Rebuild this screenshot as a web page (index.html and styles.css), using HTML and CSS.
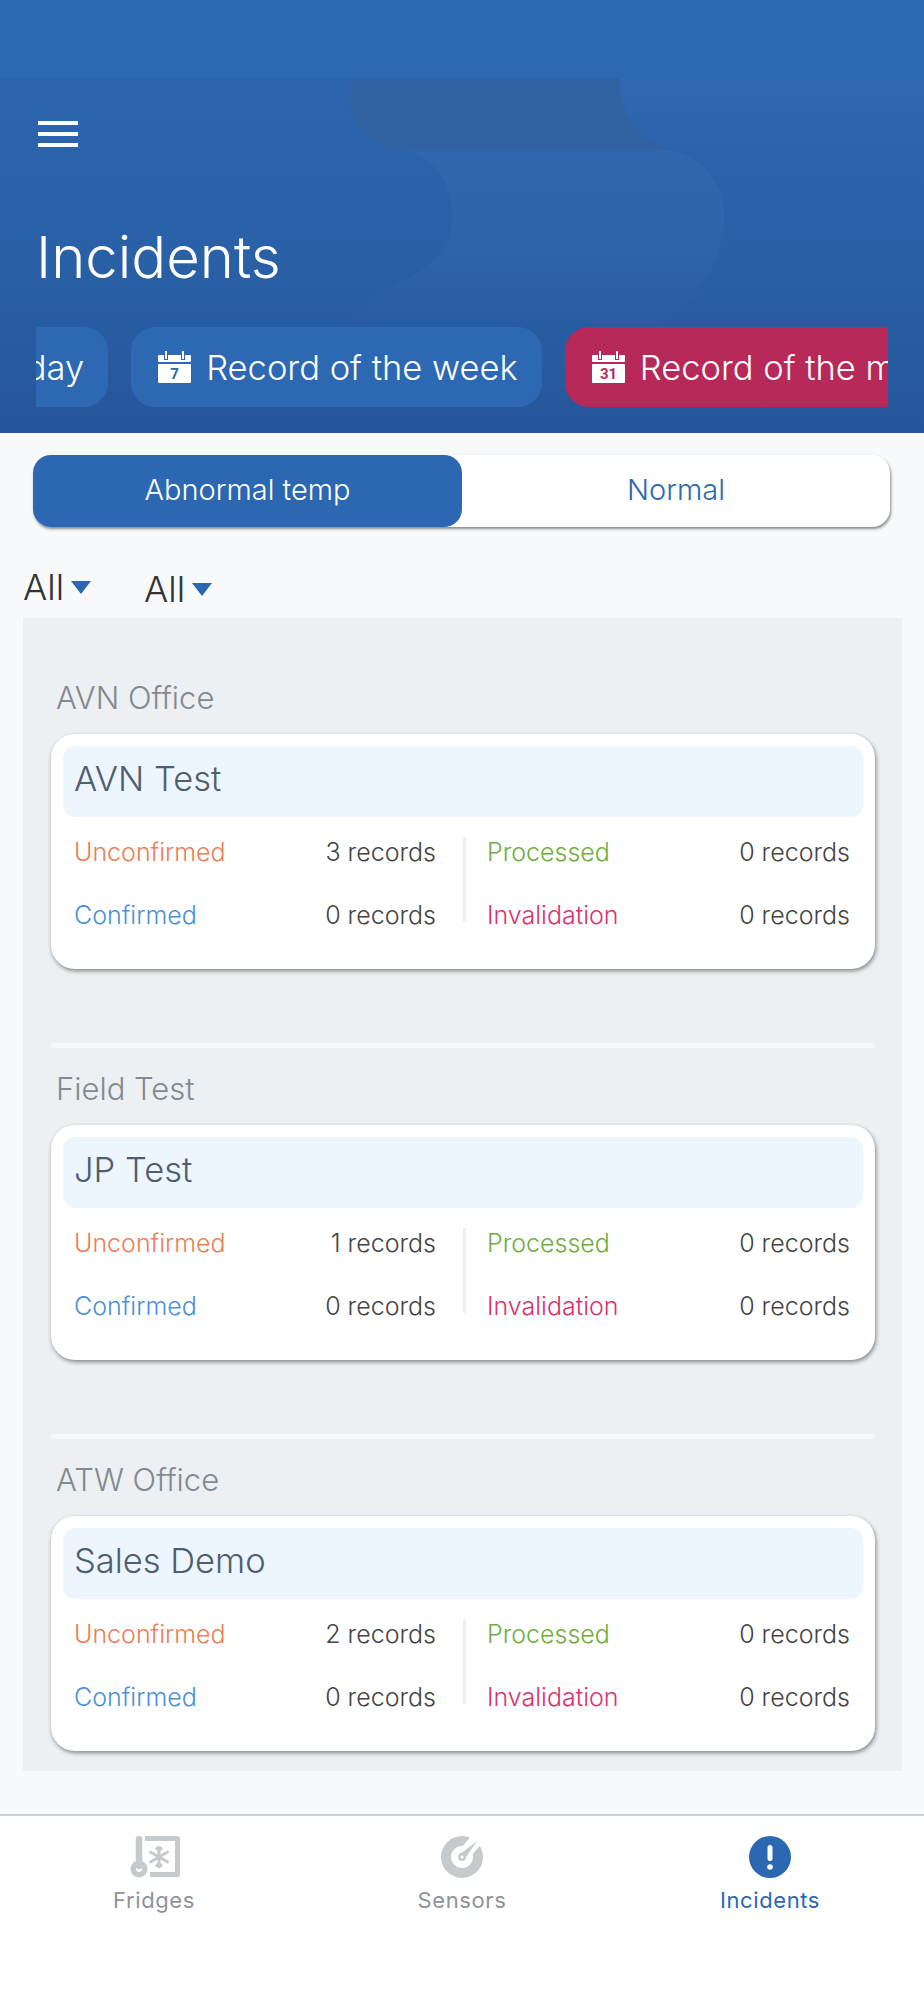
FILE: index.html
```html
<!DOCTYPE html>
<html lang="en">
<head>
    <meta charset="UTF-8">
    <meta name="viewport" content="width=device-width, initial-scale=1.0">
    <title>Incidents</title>
    <link rel="stylesheet" href="styles.css">
</head>
<body>
    <header class="top">
        <!-- Faint background shapes -->
        <svg class="top-shapes" width="924" height="433" viewBox="0 0 924 433">
            <defs>
                <linearGradient id="fade" x1="0" y1="0" x2="0" y2="1">
                    <stop offset="0" stop-color="#fff" stop-opacity="0.025"/>
                    <stop offset="0.7" stop-color="#fff" stop-opacity="0.02"/>
                    <stop offset="1" stop-color="#fff" stop-opacity="0"/>
                </linearGradient>
                <linearGradient id="fadeTop" x1="0" y1="0" x2="0" y2="1">
                    <stop offset="0" stop-color="#fff" stop-opacity="0.03"/>
                    <stop offset="1" stop-color="#fff" stop-opacity="0"/>
                </linearGradient>
            </defs>
            <path d="M350 78V100C352 130 372 150 405 150H670C635 140 620 115 620 78Z" fill="#3f5f8c" opacity="0.3"/>
            <path d="M620 78C620 115 635 140 670 150H924V78Z" fill="url(#fadeTop)"/>
            <path d="M405 150H670C705 158 724 185 724 215C724 265 700 300 650 330H350C352 310 375 295 405 280C438 262 452 245 452 215C452 180 430 155 405 150Z" fill="url(#fade)"/>
        </svg>
        <div class="menu"><span></span><span></span><span></span></div>
        <h1>Incidents</h1>
        <div class="chips">
            <div class="chip chip-first">Record of the day</div>
            <div class="chip">
                <svg class="cal" width="33" height="32" viewBox="0 0 33 32">
                    <rect y="4" width="33" height="7" rx="1" fill="#fff"/>
                    <rect y="13" width="33" height="19" rx="1" fill="#fff"/>
                    <rect x="6" y="4" width="4" height="5" class="cal-blue"/>
                    <rect x="23" y="4" width="4" height="5" class="cal-blue"/>
                    <rect x="7" y="0" width="2" height="8" fill="#fff"/>
                    <rect x="24" y="0" width="2" height="8" fill="#fff"/>
                    <text x="16.5" y="28" class="cal-num cal-blue">7</text>
                </svg>
                Record of the week
            </div>
            <div class="chip chip-active">
                <svg class="cal" width="33" height="32" viewBox="0 0 33 32">
                    <rect y="4" width="33" height="7" rx="1" fill="#fff"/>
                    <rect y="13" width="33" height="19" rx="1" fill="#fff"/>
                    <rect x="6" y="4" width="4" height="5" class="cal-red"/>
                    <rect x="23" y="4" width="4" height="5" class="cal-red"/>
                    <rect x="7" y="0" width="2" height="8" fill="#fff"/>
                    <rect x="24" y="0" width="2" height="8" fill="#fff"/>
                    <text x="16.5" y="28" class="cal-num cal-red">31</text>
                </svg>
                Record of the month
            </div>
        </div>
    </header>

    <main>
        <div class="segment">
            <div class="segment-item segment-on">Abnormal temp</div>
            <div class="segment-item">Normal</div>
        </div>

        <div class="filters">
            <div class="filter">All<span class="caret"></span></div>
            <div class="filter filter-second">All<span class="caret"></span></div>
        </div>

        <div class="panel">
            <!-- AVN Office -->
            <section class="group">
                <h2>AVN Office</h2>
                <div class="card">
                    <div class="card-title">AVN Test</div>
                    <div class="stats">
                        <div class="col">
                            <p><span class="orange">Unconfirmed</span><span>3 records</span></p>
                            <p><span class="blue">Confirmed</span><span>0 records</span></p>
                        </div>
                        <div class="col">
                            <p><span class="green">Processed</span><span>0 records</span></p>
                            <p><span class="pink">Invalidation</span><span>0 records</span></p>
                        </div>
                    </div>
                </div>
            </section>

            <!-- Field Test -->
            <section class="group">
                <h2>Field Test</h2>
                <div class="card">
                    <div class="card-title">JP Test</div>
                    <div class="stats">
                        <div class="col">
                            <p><span class="orange">Unconfirmed</span><span>1 records</span></p>
                            <p><span class="blue">Confirmed</span><span>0 records</span></p>
                        </div>
                        <div class="col">
                            <p><span class="green">Processed</span><span>0 records</span></p>
                            <p><span class="pink">Invalidation</span><span>0 records</span></p>
                        </div>
                    </div>
                </div>
            </section>

            <!-- ATW Office -->
            <section class="group">
                <h2>ATW Office</h2>
                <div class="card">
                    <div class="card-title">Sales Demo</div>
                    <div class="stats">
                        <div class="col">
                            <p><span class="orange">Unconfirmed</span><span>2 records</span></p>
                            <p><span class="blue">Confirmed</span><span>0 records</span></p>
                        </div>
                        <div class="col">
                            <p><span class="green">Processed</span><span>0 records</span></p>
                            <p><span class="pink">Invalidation</span><span>0 records</span></p>
                        </div>
                    </div>
                </div>
            </section>
        </div>
    </main>

    <nav class="tabs">
        <div class="tab">
            <svg width="52" height="42" viewBox="0 0 52 42">
                <path d="M11 3V30" stroke="#c6cacd" stroke-width="6.5" stroke-linecap="round" fill="none"/>
                <path fill-rule="evenodd" fill="#c6cacd" d="M11 24.500a8.500 8.500 0 1 0 .01 0ZM11 30a3 3 0 1 1-.01 0Z"/>
                <path d="M17 2.500H49.500V38.500H22" stroke="#c6cacd" stroke-width="5" stroke-linejoin="round" fill="none"/>
                <path d="M31 10V32M21.500 15.500L40.500 26.500M21.500 26.500L40.500 15.500M28 11.500L31 14.500L34 11.500M28 30.500L31 27.500L34 30.500" stroke="#c6cacd" stroke-width="3" fill="none"/>
            </svg>
            <span>Fridges</span>
        </div>
        <div class="tab">
            <svg width="42" height="42" viewBox="0 0 42 42">
                <circle cx="21" cy="21" r="16" stroke="#c6cacd" stroke-width="10" fill="none"/>
                <path d="M16 17L30 0H42V6L25 26Z" fill="#fff"/>
                <path d="M36 5L23.500 23.500L18.500 18.500Z" fill="#c6cacd"/>
                <circle cx="21" cy="21" r="4" fill="#c6cacd"/>
                <circle cx="21" cy="21" r="1.600" fill="#fff"/>
            </svg>
            <span>Sensors</span>
        </div>
        <div class="tab tab-on">
            <svg width="42" height="42" viewBox="0 0 42 42">
                <circle cx="21" cy="21" r="21" fill="#2b68b1"/>
                <rect x="18.500" y="9" width="5" height="16" rx="2.500" fill="#fff"/>
                <circle cx="21" cy="31" r="2.800" fill="#fff"/>
            </svg>
            <span>Incidents</span>
        </div>
    </nav>
</body>
</html>
```
FILE: styles.css
```css
/* Global Styles */
* {
    margin: 0;
    padding: 0;
    box-sizing: border-box;
}

body {
    width: 924px;
    height: 2000px;
    overflow: hidden;
    font-family: 'Inter', 'Roboto', sans-serif;
    background-color: #f8f9fb;
    color: #333;
}

/* Header */
.top {
    position: relative;
    height: 433px;
    padding: 121px 36px 0;
    background: linear-gradient(#2c69b2 78px, #2a65ae 78px, #2a62a9 220px, #26569a 100%);
    color: white;
    overflow: hidden;
}

.top-shapes {
    position: absolute;
    top: 0;
    left: 0;
}

.menu {
    position: relative;
    width: 40px;
    display: flex;
    flex-direction: column;
    gap: 7px;
    margin-left: 2px;
}

.menu span {
    display: block;
    height: 4px;
    background-color: white;
}

.top h1 {
    position: relative;
    margin-top: 76px;
    font-size: 58px;
    line-height: 68px;
    font-weight: 300;
}

.chips {
    position: relative;
    display: flex;
    gap: 23px;
    justify-content: flex-end;
    width: 852px;
    margin-top: 36px;
    overflow: hidden;
}

.chip {
    flex: none;
    height: 80px;
    padding: 0 24px 0 27px;
    display: flex;
    align-items: center;
    gap: 15px;
    font-size: 34.5px;
    font-weight: 300;
    white-space: nowrap;
    background-color: #2c69b2;
    border-radius: 24px;
}

.chip-first {
    margin-left: -300px;
}

.chip-active {
    background-color: #b62958;
    margin-right: -103px;
}

.cal-num {
    font-family: 'Roboto', sans-serif;
    font-size: 15px;
    font-weight: 700;
    text-anchor: middle;
}

.cal-blue {
    fill: #2c69b2;
}

.cal-red {
    fill: #b62958;
}

/* Toggle */
main {
    padding: 22px 22px 0 23px;
}

.segment {
    display: flex;
    width: 857px;
    height: 72px;
    margin-left: 10px;
    background-color: white;
    border-radius: 18px;
    box-shadow: 1px 2px 3px rgba(0, 0, 0, 0.45);
}

.segment-item {
    flex: 1;
    display: flex;
    align-items: center;
    justify-content: center;
    padding-bottom: 4px;
    font-size: 29px;
    font-weight: 300;
    color: #2b68b1;
    border-radius: 18px;
}

.segment-on {
    flex: none;
    width: 429px;
    background-color: #2b68b1;
    color: white;
}

/* Filters */
.filters {
    display: flex;
    height: 91px;
    align-items: flex-start;
    padding-top: 39px;
}

.filter {
    display: flex;
    align-items: center;
    gap: 7px;
    width: 121px;
    font-size: 36px;
    font-weight: 300;
    line-height: 42px;
    color: #333;
}

.filter-second {
    margin-top: 2px;
}

.caret {
    width: 0;
    height: 0;
    border-left: 10px solid transparent;
    border-right: 10px solid transparent;
    border-top: 13px solid #2b68b1;
}

/* Grouped list */
.panel {
    height: 1153px;
    background-color: #ecf0f3;
    padding: 0 27px 0 28px;
}

.group {
    height: 391px;
    padding-top: 23px;
    border-top: 5px solid #f5f7f9;
}

.group:first-child {
    border-top-color: transparent;
    padding-top: 57px;
    height: 425px;
}

.group h2 {
    font-size: 31px;
    font-weight: 300;
    line-height: 36px;
    margin-left: 5px;
    color: #84898e;
}

.card {
    height: 235px;
    margin-top: 18px;
    padding: 12px;
    background-color: white;
    border-radius: 24px;
    box-shadow: 1px 2px 4px rgba(0, 0, 0, 0.45);
}

.card-title {
    height: 71px;
    padding-left: 11px;
    font-size: 34.5px;
    font-weight: 300;
    line-height: 66px;
    color: #505d6e;
    background-color: #edf6fe;
    border-radius: 12px;
}

.stats {
    display: grid;
    grid-template-columns: 400px 1fr;
    margin-top: 20px;
}

.col {
    display: flex;
    flex-direction: column;
    gap: 28px;
    padding: 0 27px 0 11px;
    height: 85px;
}

.col + .col {
    border-left: 3px solid #ecf0f3;
    padding: 0 13px 0 21px;
}

.col p {
    display: flex;
    justify-content: space-between;
    margin-top: -1px;
    font-size: 25px;
    font-weight: 300;
    line-height: 36px;
    color: #444;
}

.col p:first-child {
    margin-top: -3px;
}

.orange { color: #ea7f53; }
.blue { color: #4a90d9; }
.green { color: #6fae3c; }
.pink { color: #d8336f; }

/* Bottom tabs */
.tabs {
    position: absolute;
    left: 0;
    top: 1814px;
    width: 924px;
    height: 186px;
    display: flex;
    background-color: white;
    border-top: 2px solid #cdcdd0;
}

.tab {
    flex: 1;
    display: flex;
    flex-direction: column;
    align-items: center;
    padding-top: 20px;
    font-size: 22px;
    letter-spacing: 0.6px;
    color: #8e9398;
}

.tab span {
    margin-top: 8px;
    line-height: 28px;
}

.tab-on {
    color: #2b68b1;
}
```
